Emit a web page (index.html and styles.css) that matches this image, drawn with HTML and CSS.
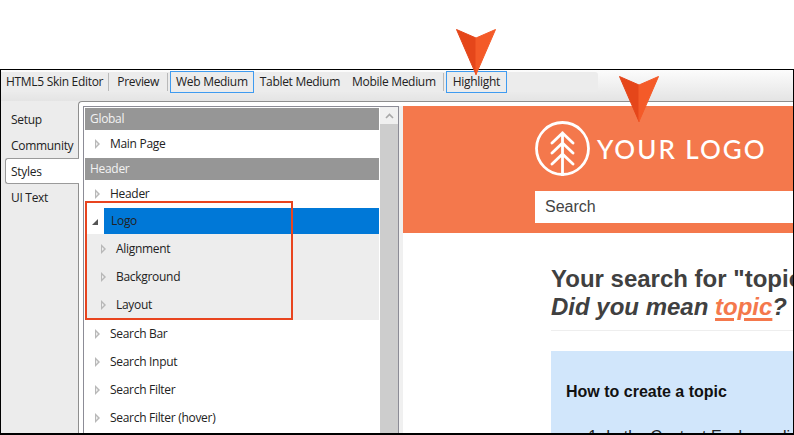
FILE: index.html
```html
<!DOCTYPE html>
<html lang="en">
<head>
    <meta charset="UTF-8">
    <meta name="viewport" content="width=device-width, initial-scale=1.0">
    <title>HTML5 Skin Editor</title>
    <link rel="stylesheet" href="styles.css">
</head>
<body>
    <svg class="arrow arrow-toolbar" viewBox="0 0 42 48" width="42" height="48"><path d="M1.5 1.5 L21 10 L21 46.5 Z" fill="#e5461a" stroke="#e5461a" stroke-linejoin="round"/><path d="M40.5 1.5 L21 10 L21 46.5 Z" fill="#f45a28" stroke="#f45a28" stroke-linejoin="round"/></svg>
    <svg class="arrow arrow-logo" viewBox="0 0 42 48" width="42" height="48"><path d="M1.5 1.5 L21 10 L21 46.5 Z" fill="#e5461a" stroke="#e5461a" stroke-linejoin="round"/><path d="M40.5 1.5 L21 10 L21 46.5 Z" fill="#f45a28" stroke="#f45a28" stroke-linejoin="round"/></svg>

    <div class="window">
        <div class="toolbar">
            <div class="toolbar-strip">
                <span class="tool tool-first">HTML5 Skin Editor</span>
                <span class="sep"></span>
                <span class="tool">Preview</span>
                <span class="sep"></span>
                <span class="tool tool-on">Web Medium</span>
                <span class="tool">Tablet Medium</span>
                <span class="tool">Mobile Medium</span>
                <span class="sep sep-tight"></span>
                <span class="tool tool-on tool-wide">Highlight</span>
            </div>
        </div>
        <div class="main">
            <div class="tabs">
                <div class="tab">Setup</div>
                <div class="tab">Community</div>
                <div class="tab tab-on">Styles</div>
                <div class="tab">UI Text</div>
            </div>
            <div class="panel">
                <div class="list">
                    <div class="tree">
                        <div class="group">Global</div>
                        <div class="row"><span class="tri"></span>Main Page</div>
                        <div class="group">Header</div>
                        <div class="row"><span class="tri"></span>Header</div>
                        <div class="row-sel"><span class="tri-open"></span><span class="sel">Logo</span></div>
                        <div class="open">
                            <div class="row row-child"><span class="tri"></span>Alignment</div>
                            <div class="row row-child"><span class="tri"></span>Background</div>
                            <div class="row row-child"><span class="tri"></span>Layout</div>
                        </div>
                        <div class="row"><span class="tri"></span>Search Bar</div>
                        <div class="row"><span class="tri"></span>Search Input</div>
                        <div class="row"><span class="tri"></span>Search Filter</div>
                        <div class="row"><span class="tri"></span>Search Filter (hover)</div>
                        <div class="callout"></div>
                    </div>
                    <div class="scroll">
                        <div class="scroll-btn">
                            <svg viewBox="0 0 9 6" width="9" height="6"><path d="M1 5 L4.5 1.5 L8 5" fill="none" stroke="#a8a8a8" stroke-width="1.6"/></svg>
                        </div>
                    </div>
                </div>
                <div class="preview">
                    <div class="banner">
                        <div class="logo">
                            <svg viewBox="0 0 55 55" width="55" height="55" fill="none" stroke="#fff" stroke-width="2.8" stroke-linecap="round">
                                <circle cx="27.5" cy="27.5" r="26"/>
                                <path d="M27.5 12 V54 M27.5 12 L17 22 M27.5 12 L38 22 M27.5 22 L17 32 M27.5 22 L38 32 M27.5 33 L17 43 M27.5 33 L38 43"/>
                            </svg>
                            <span class="logo-text">YOUR LOGO</span>
                        </div>
                        <div class="search">Search</div>
                    </div>
                    <div class="results">
                        <h1 class="heading">Your search for "topic"<br><em>Did you mean <a class="link">topic</a>?</em></h1>
                        <div class="rule"></div>
                        <div class="card">
                            <h2 class="card-title">How to create a topic</h2>
                            <ol class="steps"><li>In the Content Explorer click</li></ol>
                        </div>
                    </div>
                </div>
            </div>
        </div>
    </div>
</body>
</html>
```

FILE: styles.css
```css
html, body {
    margin: 0;
    height: 435px;
    overflow: hidden;
}
body {
    position: relative;
    background-color: #fff;
    font-family: "Open Sans", "Noto Sans", sans-serif;
    color: #222;
}
.arrow {
    position: absolute;
    z-index: 5;
}
.arrow-toolbar {
    left: 455px;
    top: 28px;
}
.arrow-logo {
    left: 618px;
    top: 75px;
}
.window {
    box-sizing: border-box;
    margin-top: 69px;
    height: 366px;
    border: 1px solid #000;
    border-bottom-width: 2px;
    display: flex;
    flex-direction: column;
    overflow: hidden;
    background-color: #ececec;
}
.toolbar {
    height: 31px;
    flex: none;
    background: linear-gradient(#fcfcfc, #e4e4e4);
}
.toolbar-strip {
    width: 597px;
    height: 20px;
    margin-top: 2px;
    padding-left: 5px;
    box-sizing: border-box;
    display: flex;
    align-items: center;
    background-color: #ececec;
    border-radius: 0 3px 3px 0;
}
.tool {
    font-size: 12px;
    letter-spacing: -0.3px;
    line-height: 20px;
    padding: 0 6px;
    white-space: nowrap;
}
.tool-first {
    padding: 0 5px 0 0;
}
.tool-on {
    padding: 0 5px;
    border: 1px solid #3f9bf0;
}
.tool-wide {
    padding: 0 6px;
}
.sep {
    width: 1px;
    height: 18px;
    background-color: #b9b9b9;
    margin: 0 2px;
}
.tool-first + .sep {
    margin-left: 0;
}
.sep-tight {
    margin-left: 1px;
}
.main {
    flex: 1;
    min-height: 0;
    display: flex;
}
.tabs {
    width: 77px;
    flex: none;
    padding-top: 6px;
    padding-left: 4px;
    box-sizing: border-box;
}
.tab {
    height: 26px;
    line-height: 26px;
    font-size: 12px;
    letter-spacing: -0.3px;
    padding-left: 6px;
}
.tab-on {
    background-color: #fff;
    border: 1px solid #9a9a9a;
    border-right: none;
    border-radius: 3px 0 0 3px;
    box-sizing: border-box;
    margin-top: -1px;
    margin-bottom: 1px;
    margin-right: -1px;
    position: relative;
    z-index: 1;
    padding-left: 5px;
    line-height: 25px;
}
.panel {
    flex: 1;
    min-width: 0;
    display: flex;
    background-color: #fff;
    border-top: 1px solid #8e8e8e;
    border-left: 1px solid #8e8e8e;
    border-top-left-radius: 4px;
    padding: 4px 0 0 4px;
}
.list {
    display: flex;
    flex: none;
    width: 316px;
    box-sizing: border-box;
    background-color: #fff;
    border: 1px solid #8c8c96;
    border-bottom: none;
    padding-left: 1px;
}
.tree {
    width: 294px;
    flex: none;
    position: relative;
    margin-top: 1px;
    margin-right: 1px;
}
.group {
    height: 22px;
    line-height: 22px;
    background-color: #969696;
    color: #f2f2f2;
    font-size: 12px;
    letter-spacing: -0.3px;
    padding-left: 5px;
}
.row {
    height: 28px;
    line-height: 28px;
    font-size: 12px;
    letter-spacing: -0.3px;
    display: flex;
    align-items: center;
    padding-left: 10px;
}
.tri {
    position: relative;
    width: 0;
    height: 0;
    border-left: 5px solid #b8b8b8;
    border-top: 5px solid transparent;
    border-bottom: 5px solid transparent;
    margin-right: 10px;
}
.tri::after {
    content: "";
    position: absolute;
    left: -4px;
    top: -2px;
    border-left: 2px solid #efefef;
    border-top: 2px solid transparent;
    border-bottom: 2px solid transparent;
}
.tri-open {
    width: 0;
    height: 0;
    border-left: 6px solid transparent;
    border-bottom: 6px solid #555;
    margin-right: 6px;
    margin-top: 2px;
}
.row-sel {
    height: 26px;
    display: flex;
    align-items: center;
    padding-left: 7px;
    font-size: 12px;
    letter-spacing: -0.3px;
}
.sel {
    flex: 1;
    background-color: #0078d7;
    height: 26px;
    line-height: 26px;
    padding-left: 7px;
}
.open {
    background-color: #ededed;
    padding: 1px 0;
}
.row-child {
    padding-left: 16px;
}
.callout {
    position: absolute;
    left: 0;
    top: 93px;
    width: 208px;
    height: 119px;
    box-sizing: border-box;
    border: 2px solid #e8441f;
}
.scroll {
    width: 18px;
    flex: none;
    background-color: #cdcdcd;
}
.scroll-btn {
    height: 17px;
    background-color: #f0f0f0;
    display: flex;
    align-items: center;
    justify-content: center;
}
.preview {
    flex: 1;
    min-width: 0;
    overflow: hidden;
    background-color: #fff;
    border-left: 4px solid #f0f0f0;
}
.banner {
    height: 127px;
    background-color: #f4784c;
    padding-left: 132px;
    box-sizing: border-box;
    padding-top: 15px;
}
.logo {
    display: flex;
    align-items: center;
    gap: 7px;
    height: 55px;
}
.logo-text {
    font-family: Lato, sans-serif;
    font-size: 26px;
    font-weight: 500;
    letter-spacing: 2px;
    color: #fff;
}
.search {
    margin-top: 15px;
    height: 32px;
    line-height: 32px;
    background-color: #fff;
    font-family: "Liberation Sans", Arial, sans-serif;
    font-size: 16px;
    color: #444;
    padding-left: 10px;
}
.results {
    padding: 32px 0 0 148px;
    width: 640px;
    font-family: "Liberation Sans", Arial, sans-serif;
}
.heading {
    margin: 0;
    font-size: 24px;
    line-height: 28px;
    font-weight: bold;
    color: #404040;
    white-space: nowrap;
}
.link {
    color: #f4784c;
    text-decoration: underline;
    text-decoration-thickness: 3px;
    text-underline-offset: 3px;
}
.rule {
    height: 1px;
    background-color: #eee;
    margin-top: 9px;
}
.card {
    margin-top: 20px;
    background-color: #d1e6fb;
    padding: 31px 15px 0;
    height: 200px;
}
.card-title {
    margin: 0;
    font-size: 16px;
    line-height: 20px;
    color: #111;
}
.steps {
    margin: 26px 0 0;
    padding-left: 40px;
    font-size: 16px;
    color: #222;
    white-space: nowrap;
}
```
